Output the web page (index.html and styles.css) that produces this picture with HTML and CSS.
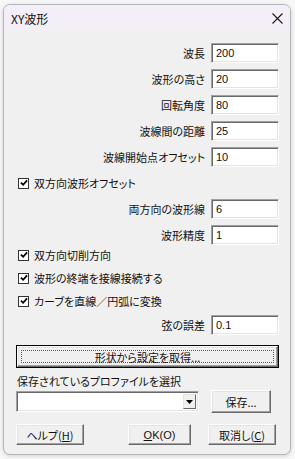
FILE: index.html
```html
<!DOCTYPE html>
<html lang="ja">
<head>
  <meta charset="UTF-8" />
  <meta name="viewport" content="width=device-width, initial-scale=1.0"/>
  <title>XY波形</title>
  <link rel="stylesheet" href="styles.css">
</head>
<body>
  <div class="window">
    <div class="titlebar">
      <span class="title">XY波形</span>
      <svg class="close" width="11" height="11" viewBox="0 0 11 11">
        <path d="M0.5 0.5 L10.5 10.5 M10.5 0.5 L0.5 10.5" stroke="#1a1a1a" stroke-width="1.1" fill="none"/>
      </svg>
    </div>

    <div class="client">
      <div class="row first">
        <label>波長</label><div class="field">200</div>
      </div>
      <div class="row">
        <label>波形の高さ</label><div class="field">20</div>
      </div>
      <div class="row">
        <label>回転角度</label><div class="field">80</div>
      </div>
      <div class="row">
        <label>波線間の距離</label><div class="field">25</div>
      </div>
      <div class="row">
        <label>波線開始点オフセット</label><div class="field">10</div>
      </div>

      <div class="row check">
        <span class="box"><svg width="8" height="8" viewBox="0 0 9 9"><path d="M1 4 L3.5 6.5 L8 1.5" stroke="#000" stroke-width="2" fill="none"/></svg></span>
        <span>双方向波形オフセット</span>
      </div>

      <div class="row">
        <label>両方向の波形線</label><div class="field">6</div>
      </div>
      <div class="row">
        <label>波形精度</label><div class="field">1</div>
      </div>

      <div class="row check flush">
        <span class="box"><svg width="8" height="8" viewBox="0 0 9 9"><path d="M1 4 L3.5 6.5 L8 1.5" stroke="#000" stroke-width="2" fill="none"/></svg></span>
        <span>双方向切削方向</span>
      </div>
      <div class="row check tight">
        <span class="box"><svg width="8" height="8" viewBox="0 0 9 9"><path d="M1 4 L3.5 6.5 L8 1.5" stroke="#000" stroke-width="2" fill="none"/></svg></span>
        <span>波形の終端を接線接続する</span>
      </div>
      <div class="row check tight">
        <span class="box"><svg width="8" height="8" viewBox="0 0 9 9"><path d="M1 4 L3.5 6.5 L8 1.5" stroke="#000" stroke-width="2" fill="none"/></svg></span>
        <span>カーブを直線／円弧に変換</span>
      </div>

      <div class="row near">
        <label>弦の誤差</label><div class="field">0.1</div>
      </div>

      <div class="default-btn"><div class="btn wide"><span class="focus">形状から設定を取得...</span></div></div>

      <div class="profile-label">保存されているプロファイルを選択</div>
      <div class="profile-row">
        <div class="combo">
          <span class="drop"><svg width="7" height="4" viewBox="0 0 7 4"><path d="M0 0 H7 L3.5 4 Z" fill="#000"/></svg></span>
        </div>
        <div class="btn save">保存...</div>
      </div>

      <div class="footer">
        <div class="btn help">ヘルプ(<u>H</u>)</div>
        <div class="btn ok"><u>O</u>K(O)</div>
        <div class="btn cancel">取消し(<u>C</u>)</div>
      </div>
    </div>
  </div>
</body>
</html>
```

FILE: styles.css
```css
* {
  box-sizing: border-box;
}

body {
  margin: 0;
  padding: 4px 3px;
  background-color: #f7f7f7;
  font-family: "Noto Sans CJK JP", "Liberation Sans", sans-serif;
  font-size: 11px;
  font-feature-settings: "palt";
  color: #111;
}

.window {
  width: 288px;
  height: 451px;
  border: 1px solid #b4b4b4;
  border-radius: 7px;
  overflow: hidden;
  background-color: #f0f0f0;
  box-shadow: 0 1px 4px rgba(0, 0, 0, 0.15);
}

.titlebar {
  height: 25px;
  background-color: #f3eef7;
  display: flex;
  align-items: center;
  justify-content: space-between;
  padding: 0 7px 0 7px;
}

.title {
  font-size: 12px;
  margin-top: 1px;
}

.close {
  display: block;
  margin-top: 1px;
}

.client {
  padding: 0 11px 0 12px;
}

.row {
  height: 20px;
  margin-top: 6px;
  display: flex;
  align-items: center;
  justify-content: flex-end;
  gap: 6px;
}

.row.first {
  margin-top: 13px;
}

.row.flush {
  margin-top: 0;
}

.row.tight {
  margin-top: 3px;
}

.row.near {
  margin-top: 4px;
}

.field {
  width: 68px;
  height: 20px;
  background-color: #fff;
  border: 1px solid;
  border-color: #a0a0a0 #fff #fff #a0a0a0;
  box-shadow: inset 1px 1px 0 #696969, inset -1px -1px 0 #e3e3e3;
  padding: 3px 0 0 4px;
  font-family: "Liberation Sans", sans-serif;
  font-size: 11px;
  line-height: 13px;
}

.check {
  justify-content: flex-start;
  padding-left: 2px;
  gap: 5px;
}

.box {
  width: 11px;
  height: 11px;
  background-color: #fff;
  border: 1px solid #333;
  display: flex;
  align-items: center;
  justify-content: center;
}

.box svg {
  display: block;
}

.btn {
  background-color: #f0f0f0;
  border: 1px solid;
  border-color: #fff #696969 #696969 #fff;
  box-shadow: inset -1px -1px 0 #a0a0a0, inset 1px 1px 0 #e3e3e3;
  display: flex;
  align-items: center;
  justify-content: center;
}

.default-btn {
  margin-top: 10px;
  border: 1px solid #000;
  height: 23px;
}

.wide {
  height: 21px;
  padding: 3px;
}

.focus {
  flex: 1;
  height: 100%;
  border: 1px dotted #555;
  display: flex;
  align-items: center;
  justify-content: center;
}

.profile-label {
  margin-top: 5px;
  height: 16px;
  line-height: 16px;
  padding-left: 1px;
}

.profile-row {
  display: flex;
  align-items: center;
  justify-content: space-between;
  margin-top: 1px;
}

.combo {
  width: 183px;
  height: 21px;
  background-color: #fff;
  border: 1px solid;
  border-color: #a0a0a0 #fff #fff #a0a0a0;
  box-shadow: inset 1px 1px 0 #696969, inset -1px -1px 0 #e3e3e3;
  display: flex;
  justify-content: flex-end;
  padding: 2px;
}

.drop {
  width: 13px;
  height: 100%;
  background-color: #f0f0f0;
  border: 1px solid;
  border-color: #e3e3e3 #696969 #696969 #e3e3e3;
  display: flex;
  align-items: center;
  justify-content: center;
}

.drop svg {
  display: block;
}

.save {
  width: 60px;
  height: 23px;
  margin-right: 8px;
}

.footer {
  display: flex;
  margin-top: 11px;
  gap: 17px;
}

.footer .btn {
  height: 21px;
}

.help {
  width: 68px;
  margin-right: 27px;
}

.ok {
  width: 63px;
  font-family: "Liberation Sans", "Noto Sans CJK JP", sans-serif;
}

.cancel {
  width: 68px;
}

u {
  text-decoration: underline;
  text-underline-offset: 1px;
}
```
